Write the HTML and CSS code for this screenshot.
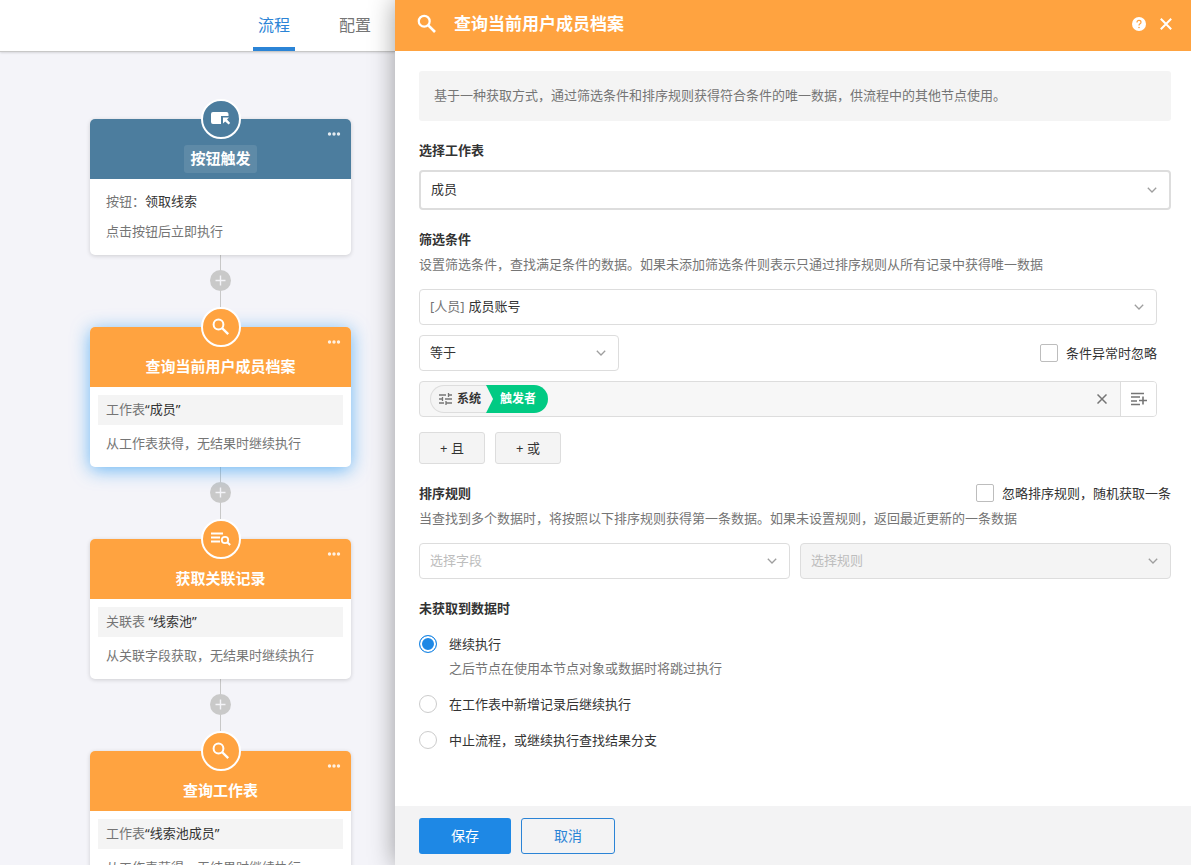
FILE: index.html
```
<!DOCTYPE html>
<html lang="zh-CN">
<head>
    <meta charset="UTF-8">
    <meta name="viewport" content="width=device-width, initial-scale=1.0">
    <title>查询当前用户成员档案</title>
    <link rel="stylesheet" href="styles.css">
</head>
<body>
    <!-- 公用图标 -->
    <svg class="sprite" aria-hidden="true">
        <symbol id="icon-search" viewBox="0 0 18 18">
            <circle cx="6.5" cy="6.5" r="4.9" fill="none" stroke="currentColor" stroke-width="2"/>
            <path d="M10 10L16.2 16.2" stroke="currentColor" stroke-width="2.4"/>
        </symbol>
        <symbol id="icon-more" viewBox="0 0 14 4">
            <circle cx="2.5" cy="2" r="1.7" fill="currentColor"/>
            <circle cx="7" cy="2" r="1.7" fill="currentColor"/>
            <circle cx="11.5" cy="2" r="1.7" fill="currentColor"/>
        </symbol>
        <symbol id="icon-plus" viewBox="0 0 21 21">
            <circle cx="10.5" cy="10.5" r="10.5" fill="#c9c9c9"/>
            <path d="M10.5 5.5V15.5M5.5 10.5H15.5" stroke="#f4f4f8" stroke-width="1.4"/>
        </symbol>
        <symbol id="icon-arrow" viewBox="0 0 10 6">
            <path d="M.8.8L5 5L9.2.8" fill="none" stroke="currentColor" stroke-width="1.3"/>
        </symbol>
        <symbol id="icon-close" viewBox="0 0 12 12">
            <path d="M.8.8L11.2 11.2M11.2.8L.8 11.2" stroke="currentColor" stroke-width="2"/>
        </symbol>
    </svg>

    <div class="page">
        <!-- 左侧流程画布 -->
        <div class="workflow">
            <nav class="tabs">
                <a class="tab active" href="#flow">流程</a>
                <a class="tab" href="#config">配置</a>
            </nav>

            <main class="canvas">
                <section class="node trigger">
                    <div class="node-header">
                        <span class="node-icon">
                            <svg width="20" height="16" viewBox="0 0 20 16">
                                <path d="M2 1H15.5Q17.5 1 17.5 3V5H10V13H2Q0 13 0 11V3Q0 1 2 1Z" fill="currentColor"/>
                                <path d="M12 6.5H18L16 8.5L19.2 12L17.6 13.6L14.2 10.4L12 12.5Z" fill="currentColor"/>
                            </svg>
                        </span>
                        <button class="node-more" type="button" aria-label="更多"><svg width="14" height="4"><use href="#icon-more"/></svg></button>
                        <h2 class="node-title">按钮触发</h2>
                    </div>
                    <div class="node-body">
                        <p class="node-row">按钮：<b>领取线索</b></p>
                        <p class="node-row">点击按钮后立即执行</p>
                    </div>
                </section>

                <div class="connector">
                    <button type="button" aria-label="添加节点"><svg width="21" height="21"><use href="#icon-plus"/></svg></button>
                </div>

                <section class="node selected">
                    <div class="node-header">
                        <span class="node-icon"><svg width="18" height="18"><use href="#icon-search"/></svg></span>
                        <button class="node-more" type="button" aria-label="更多"><svg width="14" height="4"><use href="#icon-more"/></svg></button>
                        <h2 class="node-title">查询当前用户成员档案</h2>
                    </div>
                    <div class="node-body">
                        <p class="node-row sheet">工作表<b>“成员”</b></p>
                        <p class="node-row">从工作表获得，无结果时继续执行</p>
                    </div>
                </section>

                <div class="connector">
                    <button type="button" aria-label="添加节点"><svg width="21" height="21"><use href="#icon-plus"/></svg></button>
                </div>

                <section class="node">
                    <div class="node-header">
                        <span class="node-icon">
                            <svg width="20" height="14" viewBox="0 0 20 14">
                                <path d="M0 1.5H12M0 5.5H9M0 9.5H9" stroke="currentColor" stroke-width="2"/>
                                <circle cx="14" cy="8" r="3.2" fill="none" stroke="currentColor" stroke-width="1.8"/>
                                <path d="M16 10L19.2 13" stroke="currentColor" stroke-width="2"/>
                            </svg>
                        </span>
                        <button class="node-more" type="button" aria-label="更多"><svg width="14" height="4"><use href="#icon-more"/></svg></button>
                        <h2 class="node-title">获取关联记录</h2>
                    </div>
                    <div class="node-body">
                        <p class="node-row sheet">关联表 <b>“线索池”</b></p>
                        <p class="node-row">从关联字段获取，无结果时继续执行</p>
                    </div>
                </section>

                <div class="connector">
                    <button type="button" aria-label="添加节点"><svg width="21" height="21"><use href="#icon-plus"/></svg></button>
                </div>

                <section class="node">
                    <div class="node-header">
                        <span class="node-icon"><svg width="18" height="18"><use href="#icon-search"/></svg></span>
                        <button class="node-more" type="button" aria-label="更多"><svg width="14" height="4"><use href="#icon-more"/></svg></button>
                        <h2 class="node-title">查询工作表</h2>
                    </div>
                    <div class="node-body">
                        <p class="node-row sheet">工作表<b>“线索池成员”</b></p>
                        <p class="node-row">从工作表获得，无结果时继续执行</p>
                    </div>
                </section>
            </main>
        </div>

        <!-- 右侧节点设置 -->
        <form class="drawer">
            <header class="drawer-header">
                <svg width="20" height="20"><use href="#icon-search"/></svg>
                <h1>查询当前用户成员档案</h1>
                <button type="button" aria-label="帮助">
                    <svg width="14" height="14" viewBox="0 0 14 14">
                        <circle cx="7" cy="7" r="7" fill="currentColor"/>
                        <path d="M5 5.4Q5 3.4 7 3.4T9 5.2Q9 6.2 8 6.8T7 8.6" fill="none" stroke="#ffa340" stroke-width="1.2"/>
                        <circle cx="7" cy="10.5" r=".8" fill="#ffa340"/>
                    </svg>
                </button>
                <button type="button" aria-label="关闭"><svg width="12" height="12"><use href="#icon-close"/></svg></button>
            </header>

            <div class="drawer-body">
                <p class="tip">基于一种获取方式，通过筛选条件和排序规则获得符合条件的唯一数据，供流程中的其他节点使用。</p>

                <label class="label" for="sheet">选择工作表</label>
                <div class="select large">
                    <select id="sheet"><option>成员</option></select>
                    <svg class="arrow" width="10" height="6"><use href="#icon-arrow"/></svg>
                </div>

                <h3 class="label">筛选条件</h3>
                <p class="desc">设置筛选条件，查找满足条件的数据。如果未添加筛选条件则表示只通过排序规则从所有记录中获得唯一数据</p>

                <div class="filter">
                    <div class="select">
                        <label class="type" for="field">[人员]</label>
                        <select id="field"><option>成员账号</option></select>
                        <svg class="arrow" width="10" height="6"><use href="#icon-arrow"/></svg>
                    </div>
                    <div class="filter-row">
                        <div class="select operator">
                            <select aria-label="条件"><option>等于</option></select>
                            <svg class="arrow" width="10" height="6"><use href="#icon-arrow"/></svg>
                        </div>
                        <label class="check"><input type="checkbox">条件异常时忽略</label>
                    </div>
                    <div class="value">
                        <span class="tag">
                            <span class="tag-source">
                                <svg width="13" height="12" viewBox="0 0 13 12">
                                    <path d="M0 2H7M9.5 2H13M9.5 0V4M0 6H3.5M3.5 4V8M6 6H13M0 10H5M7 10H13M7 8V12" fill="none" stroke="#757575" stroke-width="1.3"/>
                                </svg>
                                系统
                            </span>
                            <span class="tag-field">触发者</span>
                        </span>
                        <button class="clear" type="button" aria-label="清除">
                            <svg width="10" height="10" viewBox="0 0 10 10"><path d="M.5.5L9.5 9.5M9.5.5L.5 9.5" stroke="currentColor" stroke-width="1.5"/></svg>
                        </button>
                        <button class="insert" type="button" aria-label="选择字段值">
                            <svg width="16" height="14" viewBox="0 0 16 14">
                                <path d="M0 1.5H13M0 5H9M0 9H6M0 12.5H9M12 4.5V12.5M8 8.5H16" stroke="currentColor" stroke-width="1.6"/>
                            </svg>
                        </button>
                    </div>
                </div>

                <div class="add">
                    <button type="button">+ 且</button>
                    <button type="button">+ 或</button>
                </div>

                <div class="label-row">
                    <h3 class="label">排序规则</h3>
                    <label class="check"><input type="checkbox">忽略排序规则，随机获取一条</label>
                </div>
                <p class="desc">当查找到多个数据时，将按照以下排序规则获得第一条数据。如果未设置规则，返回最近更新的一条数据</p>
                <div class="sort">
                    <div class="select empty">
                        <select aria-label="排序字段"><option>选择字段</option></select>
                        <svg class="arrow" width="10" height="6"><use href="#icon-arrow"/></svg>
                    </div>
                    <div class="select empty disabled">
                        <select aria-label="排序方式" disabled><option>选择规则</option></select>
                        <svg class="arrow" width="10" height="6"><use href="#icon-arrow"/></svg>
                    </div>
                </div>

                <h3 class="label">未获取到数据时</h3>
                <div class="radios">
                    <div>
                        <label class="radio"><input type="radio" name="empty" checked>继续执行</label>
                        <p class="radio-desc">之后节点在使用本节点对象或数据时将跳过执行</p>
                    </div>
                    <label class="radio"><input type="radio" name="empty">在工作表中新增记录后继续执行</label>
                    <label class="radio"><input type="radio" name="empty">中止流程，或继续执行查找结果分支</label>
                </div>
            </div>

            <footer class="drawer-footer">
                <button class="save" type="button">保存</button>
                <button class="cancel" type="button">取消</button>
            </footer>
        </form>
    </div>
</body>
</html>
```
FILE: styles.css
```
* {
    box-sizing: border-box;
}

body {
    margin: 0;
    font-family: "Noto Sans", "Noto Sans CJK SC", sans-serif;
    font-size: 13px;
    line-height: 20px;
    color: #333;
}

h1, h2, h3, p {
    margin: 0;
}

button, select, input {
    margin: 0;
    padding: 0;
    font: inherit;
    color: inherit;
}

button {
    border: none;
    background: none;
    cursor: pointer;
}

svg {
    display: block;
}

.sprite {
    position: absolute;
    width: 0;
    height: 0;
}

.page {
    display: flex;
    height: 100vh;
    overflow: hidden;
}

/* 左侧画布 */
.workflow {
    flex: 0 0 395px;
    display: flex;
    flex-direction: column;
    background: #f4f4f9;
}

.tabs {
    flex: none;
    display: flex;
    justify-content: flex-end;
    gap: 39px;
    padding-right: 19px;
    background: #fff;
    border-bottom: 1px solid #c8c8c8;
    box-shadow: 0 1px 2px rgba(0, 0, 0, 0.12);
}

.tab {
    padding: 4px 5px 0;
    border-bottom: 4px solid transparent;
    font-size: 16px;
    line-height: 43px;
    color: #757575;
    text-decoration: none;
}

.tab.active {
    color: #2b84d6;
    border-bottom-color: #2b84d6;
}

.canvas {
    flex: 1;
    min-height: 0;
    padding: 67px 44px 0 90px;
    overflow: hidden;
}

/* 流程节点 */
.node {
    position: relative;
    background: #fff;
    border-radius: 5px;
    box-shadow: 0 1px 4px rgba(0, 0, 0, 0.16);
}

.node.selected {
    box-shadow: 0 3px 18px rgba(33, 150, 243, 0.65);
}

.node-header {
    display: flex;
    justify-content: center;
    padding: 26px 0 6px;
    color: #fff;
    background: #ffa340;
    border-radius: 5px 5px 0 0;
}

.trigger .node-header,
.trigger .node-icon {
    background: #4c7d9e;
}

.node-icon {
    position: absolute;
    top: -20px;
    left: calc(50% - 20px);
    display: flex;
    align-items: center;
    justify-content: center;
    width: 40px;
    height: 40px;
    border: 2px solid #fff;
    border-radius: 50%;
    background: #ffa340;
}

.node-more {
    position: absolute;
    top: 13px;
    right: 10px;
    opacity: 0.85;
}

.node-title {
    padding: 0 6px 2px;
    border-radius: 3px;
    font-size: 15px;
    line-height: 26px;
}

.trigger .node-title {
    background: rgba(255, 255, 255, 0.1);
}

.node-body {
    display: flex;
    flex-direction: column;
    gap: 3px;
    padding: 8px 8px 9px;
    color: #757575;
}

.trigger .node-body {
    gap: 0;
    padding-top: 7px;
}

.node-row {
    padding: 0 8px;
    line-height: 30px;
    white-space: nowrap;
}

.node-row b {
    font-weight: normal;
    color: #333;
}

.node-row.sheet {
    padding-bottom: 2px;
    line-height: 28px;
    background: #f4f4f4;
}

.connector {
    display: flex;
    justify-content: center;
    height: 72px;
    padding-top: 15px;
    background: linear-gradient(#c8c8c8, #c8c8c8) center / 1px 100% no-repeat;
}

.connector button {
    height: 21px;
}

/* 右侧抽屉 */
.drawer {
    position: relative;
    flex: 1;
    min-width: 0;
    display: flex;
    flex-direction: column;
    background: #fff;
    box-shadow: 0 0 24px rgba(0, 0, 0, 0.38);
}

.drawer-header {
    flex: none;
    display: flex;
    align-items: center;
    gap: 14px;
    height: 51px;
    padding: 0 19px 3px 22px;
    color: #fff;
    background: #ffa340;
}

.drawer-header h1 {
    flex: 1;
    padding-left: 3px;
    font-size: 17px;
    line-height: 24px;
}

.drawer-body {
    flex: 1;
    min-height: 0;
    padding: 20px 20px 20px 24px;
    overflow: auto;
}

.tip {
    padding: 14px 15px 16px;
    border-radius: 3px;
    color: #757575;
    background: #f4f4f4;
}

.label {
    display: block;
    margin-top: 19px;
    font-size: 13px;
    font-weight: bold;
}

.label-row {
    display: flex;
    align-items: flex-end;
    justify-content: space-between;
}

.desc {
    margin: 5px 0 15px;
    color: #757575;
}

/* 下拉框 */
.select {
    position: relative;
    display: flex;
    align-items: center;
    height: 36px;
    border: 1px solid #ddd;
    border-radius: 4px;
    background: #fff;
}

.select.large {
    height: 40px;
    margin-top: 10px;
    border-width: 2px;
}

.select select {
    flex: 1;
    min-width: 0;
    height: 100%;
    padding: 0 30px 2px 10px;
    border: none;
    outline: none;
    background: transparent;
    appearance: none;
}

.select .arrow {
    position: absolute;
    right: 12px;
    color: #9e9e9e;
    pointer-events: none;
}

.select .type {
    padding: 0 0 2px 10px;
    color: #757575;
}

.select .type + select {
    padding-left: 4px;
}

.select.empty select {
    color: #bdbdbd;
    opacity: 1;
}

.select.disabled {
    background: #f4f4f4;
}

/* 筛选条件 */
.filter {
    display: flex;
    flex-direction: column;
    gap: 10px;
    margin-right: 14px;
}

.filter-row {
    display: flex;
    align-items: center;
    justify-content: space-between;
}

.operator {
    width: 200px;
}

.check {
    display: flex;
    align-items: center;
    gap: 8px;
}

.check input {
    width: 18px;
    height: 18px;
    border: 1px solid #bdbdbd;
    border-radius: 2px;
    background: #fff;
    appearance: none;
}

.check input:checked {
    border: 5px solid #1e88e5;
}

.value {
    display: flex;
    align-items: center;
    height: 36px;
    padding-left: 10px;
    border: 1px solid #ddd;
    border-radius: 4px;
    background: #f7f7f7;
}

.tag {
    display: flex;
    height: 28px;
    font-size: 12px;
    font-weight: bold;
    line-height: 28px;
}

.tag-source {
    display: flex;
    align-items: center;
    gap: 5px;
    padding: 0 12px 0 8px;
    border: 1px solid #ddd;
    border-right: none;
    border-radius: 14px 0 0 14px;
    background: #f4f4f4;
}

.tag-field {
    margin-left: -7px;
    padding: 0 12px 0 14px;
    border-radius: 0 14px 14px 0;
    color: #fff;
    background: #01ca83;
    clip-path: polygon(0 0, 100% 0, 100% 100%, 0 100%, 7px 50%);
}

.clear {
    margin-left: auto;
    padding: 8px 13px;
    color: #757575;
}

.insert {
    display: flex;
    align-items: center;
    justify-content: center;
    width: 36px;
    height: 100%;
    border-left: 1px solid #ddd;
    border-radius: 0 3px 3px 0;
    color: #757575;
    background: #fff;
}

.add {
    display: flex;
    gap: 10px;
    margin-top: 15px;
}

.add button {
    width: 66px;
    height: 32px;
    border: 1px solid #ddd;
    border-radius: 3px;
    background: #f4f4f4;
}

.sort {
    display: grid;
    grid-template-columns: 1fr 1fr;
    gap: 10px;
}

/* 单选 */
.radios {
    display: flex;
    flex-direction: column;
    gap: 16px;
    margin-top: 16px;
}

.radio {
    display: flex;
    align-items: center;
    gap: 12px;
}

.radio input {
    width: 18px;
    height: 18px;
    border: 1px solid #ccc;
    border-radius: 50%;
    background: #fff;
    appearance: none;
}

.radio input:checked {
    border-color: #1e88e5;
    background: #1e88e5;
    box-shadow: inset 0 0 0 2px #fff;
}

.radio-desc {
    margin-top: 4px;
    padding-left: 30px;
    color: #757575;
}

/* 底部按钮 */
.drawer-footer {
    flex: none;
    display: flex;
    gap: 10px;
    padding: 12px 24px 11px;
    background: #f3f3f4;
}

.drawer-footer button {
    height: 36px;
    padding: 0 32px;
    border-radius: 3px;
    font-size: 14px;
}

.save {
    color: #fff;
    background: #1e88e5;
}

.drawer-footer .cancel {
    border: 1px solid #2b84d6;
    color: #2b84d6;
}
```
